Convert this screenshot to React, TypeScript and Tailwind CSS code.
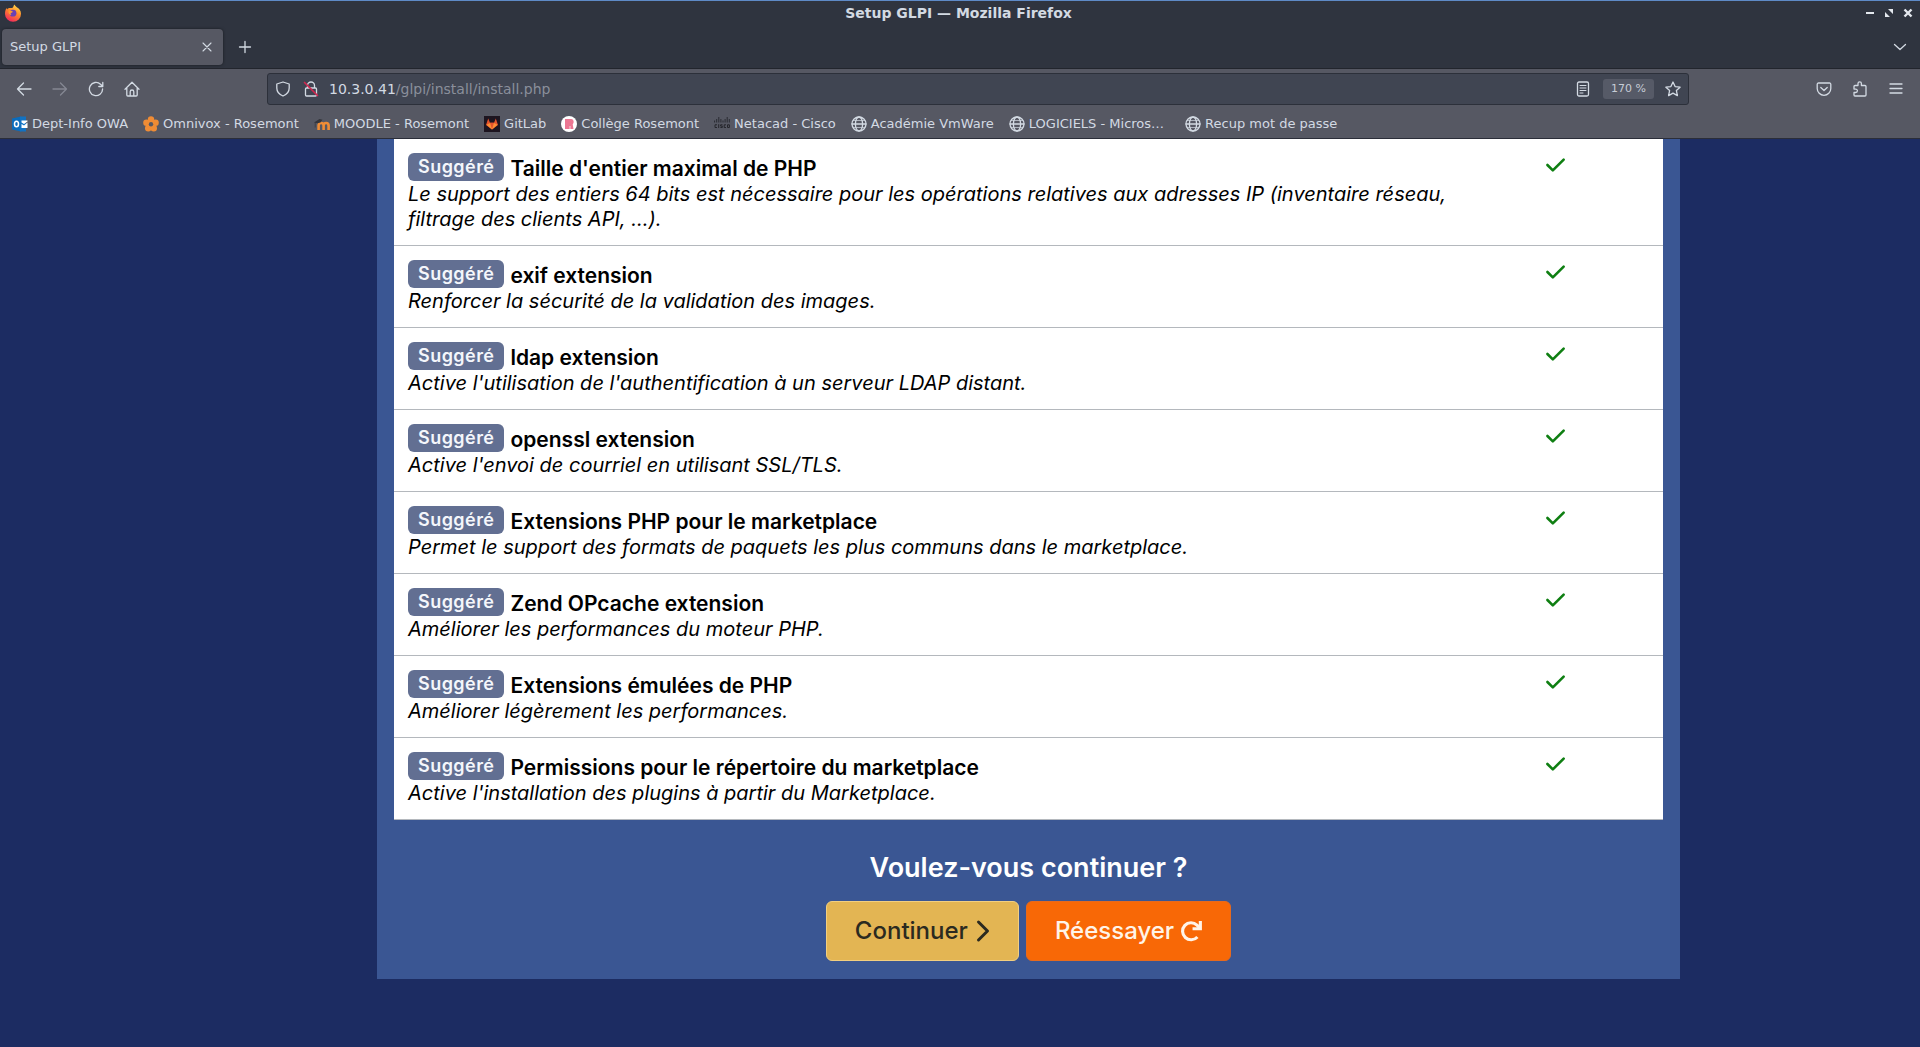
import React from "react";

type IconProps = { className?: string; children: React.ReactNode; box?: string };

const Icon = ({ className = "size-4", children, box = "0 0 16 16" }: IconProps) => (
  <svg
    viewBox={box}
    className={className}
    fill="none"
    stroke="currentColor"
    strokeWidth="1.3"
    strokeLinecap="round"
    strokeLinejoin="round"
    aria-hidden="true"
  >
    {children}
  </svg>
);

const FirefoxLogo = () => (
  <svg viewBox="0 0 18 18" className="size-[18px]" aria-hidden="true">
    <defs>
      <linearGradient id="ff" x1="0.8" y1="0" x2="0.3" y2="1">
        <stop offset="0" stopColor="#ffe14d" />
        <stop offset="0.45" stopColor="#ff8a2a" />
        <stop offset="1" stopColor="#f0245f" />
      </linearGradient>
    </defs>
    <path
      fill="url(#ff)"
      d="M10.6.6c.3 1.2 1.2 1.9 2.200 2.700 2.200 1.200 4.200 3.400 4.200 6.400a8 8 0 0 1-16 .2C1 7.400 1.600 5.300 2.700 4c0 .7.200 1 .4 1.400C3.800 4.200 5 3.700 6.600 4 8 4.300 9 3.600 9.300 2.800c.2-.8.600-1.600 1.300-2.200z"
    />
    <circle cx="9" cy="9.200" r="3.400" fill="#6b41b5" />
    <path fill="#ff9a2e" d="M4.500 6.600c1.500-.5 3 .1 4.300.9 0 1-1 1.100-1.900 1.400-.5.600-.2 1.600.8 2.100-2 .3-3.600-1.300-3.200-4.400z" />
  </svg>
);

const Globe = () => (
  <Icon>
    <circle cx="8" cy="8" r="7" />
    <ellipse cx="8" cy="8" rx="3.600" ry="7" />
    <path d="M1 8h14" />
    <path d="M2.500 4.500h11M2.500 11.500h11" strokeWidth=".7" />
  </Icon>
);

const Outlook = () => (
  <svg viewBox="0 0 16 16" className="size-4" aria-hidden="true">
    <path fill="#0b6cbc" d="M0 2.500 9 .5v15l-9-2z" />
    <path fill="#1272c2" d="M8 .5h6v15H8z" />
    <path fill="#fff" d="M9.500 4.500h6v1L12 8 9.500 6.500zM9.500 8l2.500 1.500 3.500-3v5.500h-6z" />
    <ellipse cx="4.500" cy="8" rx="2" ry="2.800" fill="none" stroke="#fff" strokeWidth="1.500" />
  </svg>
);

const Flower = () => (
  <svg viewBox="0 0 16 16" className="size-4" aria-hidden="true">
    <g fill="#ef8c35">
      <circle cx="8" cy="3.400" r="3.200" />
      <circle cx="3.400" cy="6.700" r="3.200" />
      <circle cx="12.600" cy="6.700" r="3.200" />
      <circle cx="5.200" cy="12.200" r="3.200" />
      <circle cx="10.800" cy="12.200" r="3.200" />
      <circle cx="8" cy="8.300" r="4" />
    </g>
    <circle cx="8" cy="8.300" r="2.200" fill="#565863" />
  </svg>
);

const Moodle = () => (
  <svg viewBox="0 0 16 16" className="size-4" aria-hidden="true">
    <path fill="none" stroke="#ef8c35" strokeWidth="2.600" d="M4.600 14V9.500a2.500 2.500 0 0 1 5 0V14M9.600 14V9.500a2.500 2.500 0 0 1 5 0V14" />
    <path fill="#33353c" d="M0 6.500 5.500 3l3 .8-2 2.700-3 .8z" />
    <path fill="none" stroke="#33353c" strokeWidth=".7" d="M1.200 6.500v5" />
  </svg>
);

const GitLab = () => (
  <svg viewBox="0 0 16 16" className="size-4" aria-hidden="true">
    <path fill="#1d1520" d="M0 0h16v16H0z" />
    <path fill="#e5532c" d="m8 13.500-6-4.400L4.200 2.500 6 6.700h4l1.800-4.200L14 9.100z" />
    <path fill="#fc8f35" d="M8 13.500 2.500 8.700 6 6.900h4l3.500 1.800z" />
    <path fill="#e5532c" d="M8 13.500 6 6.700h4z" />
  </svg>
);

const Rosemont = () => (
  <svg viewBox="0 0 16 16" className="size-4" aria-hidden="true">
    <circle cx="8" cy="8" r="8" fill="#fff" />
    <path fill="#ec7793" d="M4 3h6.200c2.500 0 3.300 3.500 1.500 5.200L12.500 13H4z" />
    <path stroke="#fff" strokeWidth=".7" d="M9 10v3" />
  </svg>
);

const Cisco = () => (
  <svg viewBox="0 0 16 16" className="size-4" aria-hidden="true">
    <path
      fill="none"
      stroke="#25262c"
      strokeWidth=".9"
      d="M.6 4.500v2M2.700 3v3.500M4.800 1v5.500M6.900 3v3.500M9 4.500v2M11.100 3v3.500M13.200 1v5.500M15.300 3v3.500"
    />
    <path
      fill="none"
      stroke="#25262c"
      strokeWidth="1"
      d="M3 8.800H1v2.700h2M4.700 8.200V12M8.500 8.800H6.600v1.300h1.700v1.400H6.400M12 8.800h-1.800v2.700H12M13.500 8.800h1.900v2.700h-1.900z"
    />
  </svg>
);

const bookmarks: { label: string; icon: React.ReactNode; wide?: boolean }[] = [
  { label: "Dept-Info OWA", icon: <Outlook /> },
  { label: "Omnivox - Rosemont", icon: <Flower /> },
  { label: "MOODLE - Rosemont", icon: <Moodle /> },
  { label: "GitLab", icon: <GitLab /> },
  { label: "Collège Rosemont", icon: <Rosemont /> },
  { label: "Netacad - Cisco", icon: <Cisco /> },
  { label: "Académie VmWare", icon: <Globe /> },
  { label: "LOGICIELS - Micros…", icon: <Globe />, wide: true },
  { label: "Recup mot de passe", icon: <Globe /> },
];

const checks = [
  {
    title: "Taille d'entier maximal de PHP",
    text: "Le support des entiers 64 bits est nécessaire pour les opérations relatives aux adresses IP (inventaire réseau, filtrage des clients API, ...).",
  },
  { title: "exif extension", text: "Renforcer la sécurité de la validation des images." },
  { title: "ldap extension", text: "Active l'utilisation de l'authentification à un serveur LDAP distant." },
  { title: "openssl extension", text: "Active l'envoi de courriel en utilisant SSL/TLS." },
  {
    title: "Extensions PHP pour le marketplace",
    text: "Permet le support des formats de paquets les plus communs dans le marketplace.",
  },
  { title: "Zend OPcache extension", text: "Améliorer les performances du moteur PHP." },
  { title: "Extensions émulées de PHP", text: "Améliorer légèrement les performances." },
  {
    title: "Permissions pour le répertoire du marketplace",
    text: "Active l'installation des plugins à partir du Marketplace.",
  },
];

const TitleBar = () => (
  <div className="grid h-6 grid-cols-[1fr_auto_1fr] items-center border-t border-[#5e8ac7] pl-1 pr-[7px]">
    <FirefoxLogo />
    <h1 className="text-sm leading-4 font-bold text-[#d3dae3]">Setup GLPI — Mozilla Firefox</h1>
    <div className="flex justify-end gap-[9px] text-[#e4e8ee]">
      <button aria-label="Réduire">
        <Icon className="size-[10px]" box="0 0 10 10">
          <path d="M1 5h8" strokeWidth="2" strokeLinecap="butt" />
        </Icon>
      </button>
      <button aria-label="Restaurer">
        <Icon className="size-[10px]" box="0 0 10 10">
          <path d="M4 1h5v5zM1 4v5h5z" fill="currentColor" stroke="none" />
        </Icon>
      </button>
      <button aria-label="Fermer">
        <Icon className="size-[10px]" box="0 0 10 10">
          <path d="m1.500 1.500 7 7m0-7-7 7" strokeWidth="2.400" strokeLinecap="butt" />
        </Icon>
      </button>
    </div>
  </div>
);

const TabBar = () => (
  <div className="flex h-11 items-center pt-px pr-3 pl-0.5 text-[#d3dae3]">
    <div className="flex h-9 w-[221px] items-center justify-between rounded bg-[#565863] pr-2 pl-2 text-[13px] shadow-[0_0_3px_rgba(0,0,0,0.5)]">
      <span>Setup GLPI</span>
      <button aria-label="Fermer l'onglet">
        <Icon>
          <path d="m4 4 8 8m0-8-8 8" strokeWidth="1.100" />
        </Icon>
      </button>
    </div>
    <button aria-label="Nouvel onglet" className="ml-[14px]">
      <Icon>
        <path d="M8 2.500v11M2.500 8h11" />
      </Icon>
    </button>
    <button aria-label="Lister les onglets" className="ml-auto">
      <Icon>
        <path d="m2.500 5.500 5.500 5 5.500-5" />
      </Icon>
    </button>
  </div>
);

const NavBar = () => (
  <div className="flex h-10 items-center pl-4 pr-4 text-[#d3dae3]">
    <div className="flex w-[251px] shrink-0 gap-5">
      <button aria-label="Page précédente">
        <Icon>
          <path d="M15 8H1.500M7.500 2 1.500 8l6 6" />
        </Icon>
      </button>
      <button aria-label="Page suivante" className="text-[#858793]">
        <Icon>
          <path d="M1 8h13.500M8.500 2l6 6-6 6" />
        </Icon>
      </button>
      <button aria-label="Actualiser">
        <Icon>
          <path d="M14.600 8A6.600 6.600 0 1 1 12.500 3.200L14.500 5M14.800 1.500v4h-4" />
        </Icon>
      </button>
      <button aria-label="Accueil">
        <Icon>
          <path d="M1 8.200 8 1.200l7 7M2.800 6.700V14a1 1 0 0 0 1 1h8.400a1 1 0 0 0 1-1V6.700M6.200 15v-4.200a1.800 1.800 0 0 1 3.600 0V15" />
        </Icon>
      </button>
    </div>
    <div className="flex h-8 flex-1 items-center rounded-[3px] border border-[#2c303a] bg-[#404552] pl-[7px] pr-[7px]">
      <Icon>
        <path d="M8 1 1.800 3v4c0 3.800 2.600 6.600 6.200 8 3.600-1.400 6.200-4.200 6.200-8V3z" />
      </Icon>
      <Icon className="ml-3 size-4">
        <path d="M4.500 7V4.500a3.500 3.500 0 0 1 7 0V7M3.500 7h9a1 1 0 0 1 1 1v6a1 1 0 0 1-1 1h-9a1 1 0 0 1-1-1V8a1 1 0 0 1 1-1z" />
        <path d="m1.500 1.500 13 13" stroke="#d0274f" strokeWidth="1.700" />
      </Icon>
      <label className="relative ml-[10px] flex-1 text-sm">
        <span className="pointer-events-none absolute inset-0 flex items-center text-[#8a8f9b]" aria-hidden="true">
          <span className="text-[#d3dae3]">10.3.0.41</span>/glpi/install/install.php
        </span>
        <input
          type="text"
          aria-label="Adresse"
          defaultValue="10.3.0.41/glpi/install/install.php"
          className="block w-full bg-transparent text-transparent outline-none"
        />
      </label>
      <button aria-label="Mode lecture">
        <Icon>
          <rect x="2.500" y="1" width="11" height="14" rx="1.500" />
          <path d="M5 4.500h6M5 7h6M5 9.500h6M5 12h3" strokeWidth="1" />
        </Icon>
      </button>
      <button className="mr-[11px] ml-3 h-5 rounded-[3px] bg-[#565a67] px-2 text-[11px] text-[#c6ccd6]">170 %</button>
      <button aria-label="Marquer cette page">
        <Icon>
          <path d="m8 1 2.100 4.600 5 .6-3.700 3.400 1 5L8 12.100l-4.400 2.500 1-5L.9 6.200l5-.6z" />
        </Icon>
      </button>
    </div>
    <div className="ml-[127px] flex gap-5">
      <button aria-label="Pocket">
        <Icon>
          <path d="M2.500 2h11a1.300 1.300 0 0 1 1.300 1.300V7.500a6.800 6.800 0 0 1-13.600 0V3.300A1.300 1.300 0 0 1 2.500 2z" />
          <path d="M4.800 6.500 8 9.500l3.200-3" />
        </Icon>
      </button>
      <button aria-label="Extensions">
        <Icon>
          <path d="M2 6V5.500A1 1 0 0 1 3 4.500h3V2.600a1.700 1.700 0 0 1 3.400 0v1.900H13a1 1 0 0 1 1 1V14a1 1 0 0 1-1 1H3a1 1 0 0 1-1-1v-2.500h1.700a1.700 1.700 0 0 0 0-3.400H2z" />
        </Icon>
      </button>
      <button aria-label="Menu">
        <Icon>
          <path d="M2 3h12M2 7.500h12M2 12h12" />
        </Icon>
      </button>
    </div>
  </div>
);

const BookmarksBar = () => (
  <nav className="flex h-[29px] items-center gap-[15px] pl-3 text-[13px] text-[#d3dae3]">
    {bookmarks.map((b) => (
      <a
        key={b.label}
        href="#"
        className={b.wide ? "mr-[6px] flex items-center gap-1 whitespace-nowrap" : "flex items-center gap-1 whitespace-nowrap"}
      >
        {b.icon}
        {b.label}
      </a>
    ))}
  </nav>
);

const CheckMark = () => (
  <svg
    viewBox="0 0 24 24"
    className="size-[26px]"
    fill="none"
    stroke="#0f7f12"
    strokeWidth="2.400"
    strokeLinecap="round"
    strokeLinejoin="round"
    role="img"
    aria-label="Validé"
  >
    <path d="m5 12 5 5L20 7" />
  </svg>
);

export default function App() {
  return (
    <div className="min-h-screen bg-[#1c2c62]">
      <header className="border-b border-[#2b2e39] bg-[#2f343f] font-['DejaVu_Sans',sans-serif]">
        <TitleBar />
        <TabBar />
        <div className="border-t border-[#22252d] bg-[#565863]">
          <NavBar />
          <BookmarksBar />
        </div>
      </header>

      <main className="mr-[240px] ml-[377px] bg-[#3a5693] px-[17px] pb-[18px] font-['Inter',sans-serif]">
        <table className="w-full bg-white text-black">
          <tbody>
            {checks.map((c) => (
              <tr key={c.title} className="border-b border-[#b4b8bd]">
                <td className="px-[14px] pt-[14px] pb-[13px] align-top text-xl leading-[25px]">
                  <div className="flex h-[29px] items-start gap-[6px]">
                    <span className="flex h-7 items-center rounded-md bg-[#626f92] px-[10px] text-lg font-semibold tracking-wide text-[#f4f6fb]">
                      Suggéré
                    </span>
                    <strong className="pt-[3px] text-[21px] leading-[25px] font-semibold">{c.title}</strong>
                  </div>
                  <em>{c.text}</em>
                </td>
                <td className="w-[134px] px-[13px] py-[13px] align-top">
                  <CheckMark />
                </td>
              </tr>
            ))}
          </tbody>
        </table>

        <h2 className="mt-8 text-center text-[27px] leading-8 font-semibold text-white">Voulez-vous continuer ?</h2>
        <div className="mt-[17px] flex justify-center gap-[7px] text-2xl font-medium">
          <button className="flex h-[60px] items-center gap-2 rounded-md border border-[#f2cf80] bg-[#e3b553] px-7 text-[#2b2a20]">
            Continuer
            <svg viewBox="0 0 14 24" className="h-6 w-[14px]" fill="none" stroke="currentColor" strokeWidth="3" strokeLinecap="round" strokeLinejoin="round" aria-hidden="true">
              <path d="m2.500 3 9 9-9 9" />
            </svg>
          </button>
          <button className="flex h-[60px] items-center gap-[6px] rounded-md border border-[#e86a1c] bg-[#f86806] px-7 text-[#fff4e8]">
            Réessayer
            <svg viewBox="0 0 24 24" className="size-[22px]" fill="none" stroke="currentColor" strokeWidth="3.400" aria-hidden="true">
              <path d="M19 18.500A9.300 9.300 0 1 1 18.500 5.500l3 3" />
              <path d="M22.200 1.200v8.300h-8.500" />
            </svg>
          </button>
        </div>
      </main>
    </div>
  );
}
